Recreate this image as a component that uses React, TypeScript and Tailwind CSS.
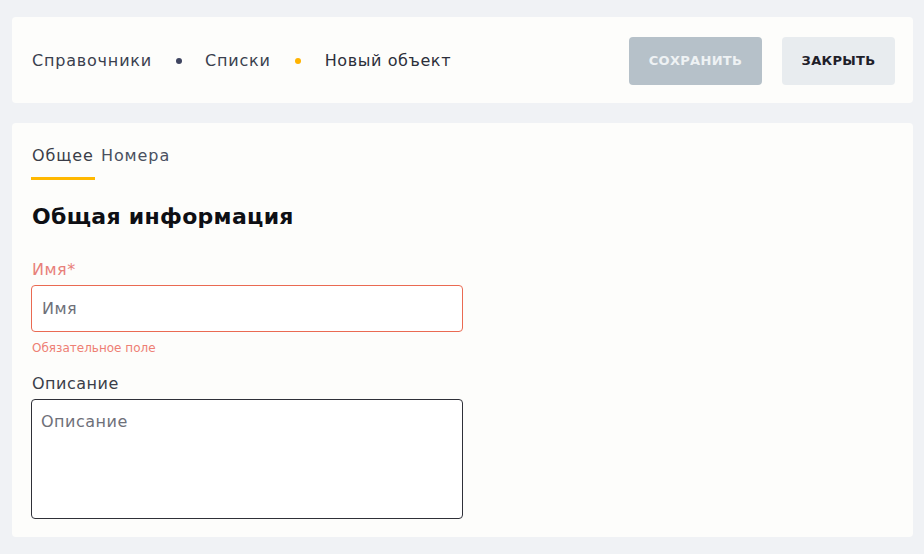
import React from "react";

export default function App() {
  return (
    <div
      className="w-[924px] h-[554px] bg-[#f0f2f5] pt-[17px] pl-[12px] pr-[11px] flex flex-col gap-[20px] text-[#3a3d48]"
      style={{ fontFamily: '"DejaVu Sans", "Noto Sans", sans-serif' }}
    >
      <div className="h-[86px] bg-[#fdfdfb] rounded-[4px] flex items-center pl-[20px] pr-[18px]">
        <div className="flex items-center text-[16px] tracking-[0.8px] text-[#3a3f4e] mt-[1px]">
          <span>Справочники</span>
          <span className="ml-[24px] mr-[23px] w-[6px] h-[6px] rounded-full bg-[#3f4560]" />
          <span>Списки</span>
          <span className="ml-[24px] mr-[24px] w-[6px] h-[6px] rounded-full bg-[#ffb300]" />
          <span className="text-[#2c2f3a] tracking-[0.6px]">Новый объект</span>
        </div>
        <div className="ml-auto mt-[2px] flex items-center gap-[20px]">
          <button className="w-[133px] h-[48px] rounded-[4px] bg-[#b6c1c9] text-[#eef2f4] text-[13px] font-bold tracking-[0.3px]">
            СОХРАНИТЬ
          </button>
          <button className="w-[113px] h-[48px] rounded-[4px] bg-[#e8ecef] text-[#1e2029] text-[13px] font-bold tracking-[0.3px]">
            ЗАКРЫТЬ
          </button>
        </div>
      </div>

      <div className="h-[414px] bg-[#fdfdfb] rounded-[4px] pl-[19px] pt-[22px] flex flex-col">
        <div className="flex items-start gap-[6px] text-[16px] tracking-[0.9px]">
          <div className="flex flex-col items-start">
            <span className="px-[1px] leading-[22px] text-[#3a3d48]">Общее</span>
            <span className="mt-[10px] w-[64px] h-[3px] bg-[#ffb800]" />
          </div>
          <span className="leading-[22px] text-[#4a5060]">Номера</span>
        </div>

        <h2 className="mt-[22px] text-[22px] font-semibold tracking-[0.3px] text-[#0e0f14] leading-[30px] pl-[1px]">
          Общая информация
        </h2>

        <label className="mt-[27px] text-[16px] tracking-[0.5px] leading-[22px] text-[#e8807a] pl-[1px]">
          Имя*
        </label>
        <input
          className="mt-[4px] w-[432px] h-[47px] rounded-[4px] border border-[#ea6a52] bg-white px-[10px] text-[16px] tracking-[0.5px] outline-none placeholder:text-[#6e7079]"
          placeholder="Имя"
        />
        <span className="mt-[9px] text-[12px] leading-[14px] text-[#ee7f74] pl-[1px]">
          Обязательное поле
        </span>

        <label className="mt-[18px] text-[16px] tracking-[0.5px] leading-[22px] text-[#3a3d48] pl-[1px]">
          Описание
        </label>
        <textarea
          className="mt-[4px] w-[432px] h-[120px] rounded-[4px] border border-[#2f3038] bg-white px-[9px] py-[11px] text-[16px] tracking-[0.5px] leading-[22px] outline-none resize-none placeholder:text-[#6e7079]"
          placeholder="Описание"
        />
      </div>
    </div>
  );
}
